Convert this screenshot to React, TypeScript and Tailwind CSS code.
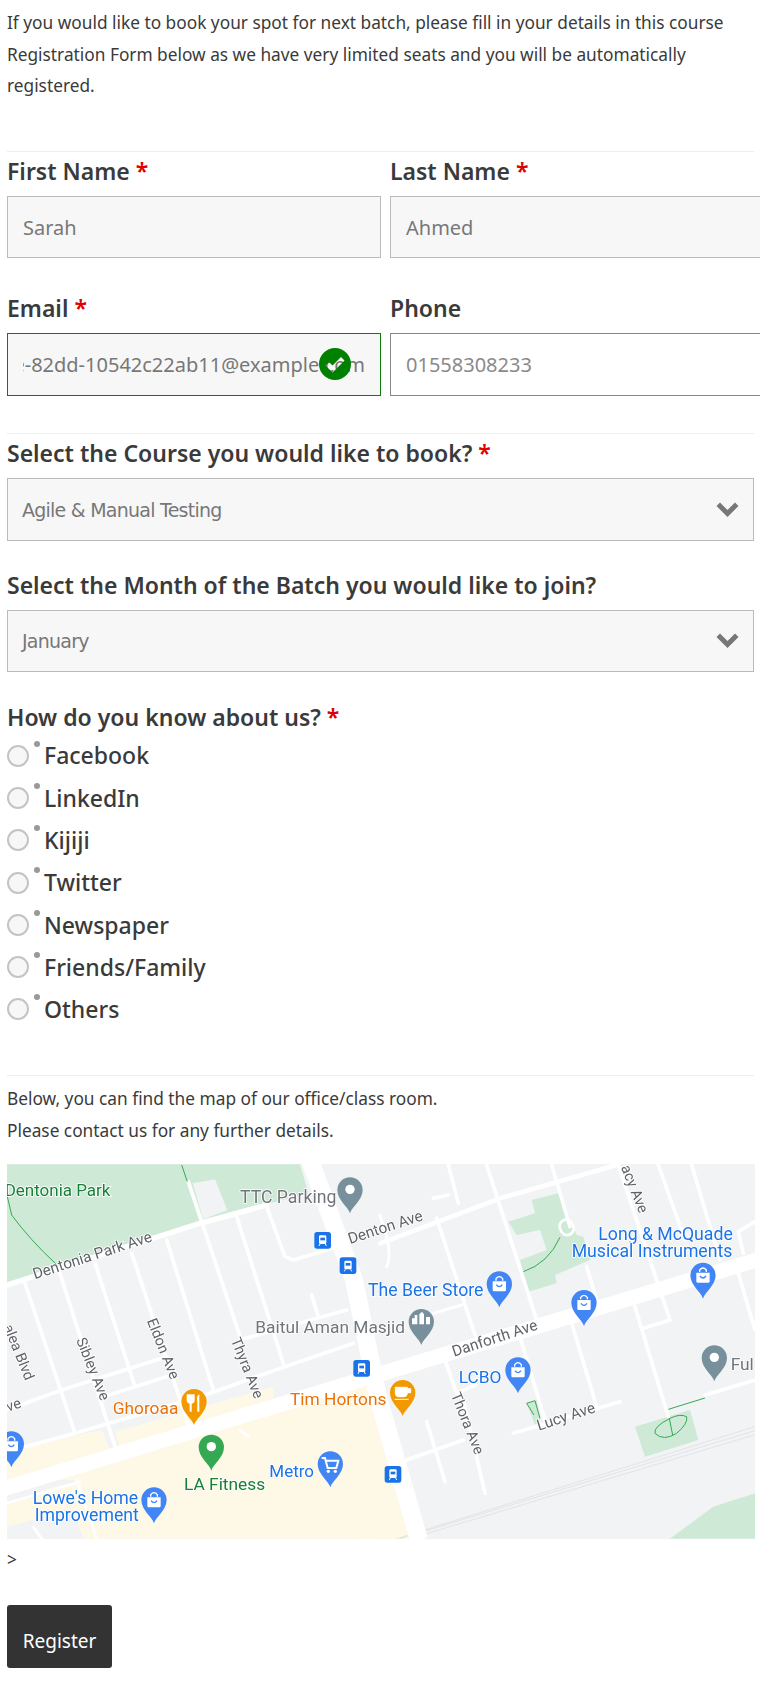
import React from 'react';

const Star = () => <span className="text-[#e00000]">*</span>;

const Field = ({ label, required, children }: { label: string; required?: boolean; children: React.ReactNode }) => (
  <div>
    <div className="text-[23px] leading-[30px] font-semibold text-[#3a3a3a] mb-[10px] whitespace-nowrap">
      {label} {required && <Star />}
    </div>
    {children}
  </div>
);

const TextBox = ({ value }: { value: string }) => (
  <div className="h-[62px] px-[15px] pt-[2px] flex items-center border border-[#bbbbbb] bg-[#f7f7f7] text-[20px] text-[#777777]">{value}</div>
);

const Chevron = () => (
  <svg viewBox="0 0 23 15" className="w-[23px] h-[15px]">
    <path d="M0.5 4L4 0.5L11.5 8L19 0.5L22.5 4L11.5 15Z" fill="#777777" />
  </svg>
);

const SelectBox = ({ value, height }: { value: string; height: string }) => (
  <div className={`${height} pl-[14px] pr-[14px] flex items-center justify-between border border-[#bbbbbb] bg-[#f7f7f7] text-[#777777]`}>
    <span className="pt-[2px] text-[19px] [font-family:'DejaVu_Sans',sans-serif] tracking-[-0.75px]">{value}</span>
    <Chevron />
  </div>
);

const Radio = ({ label }: { label: string }) => (
  <div className="h-[42.3px] flex items-center relative">
    <span className="w-[22px] h-[22px] rounded-full border-2 border-[#c4c4c4] bg-[#f7f7f7]" />
    <span className="absolute left-[27px] top-[6px] w-[6px] h-[6px] rounded-full bg-[#999999]" />
    <span className="ml-[15px] text-[23px] font-medium text-[#3a3a3a]">{label}</span>
  </div>
);

const Pin = ({ x, y, color, children }: { x: number; y: number; color: string; children?: React.ReactNode }) => (
  <g transform={`translate(${x} ${y})`}>
    <path d="M0 0C-6 -20 -38 -40 -38 -70A38 38 0 1 1 38 -70C38 -40 6 -20 0 0Z" fill={color} />
    {children}
  </g>
);

const Dot = () => <circle cx="0" cy="-72" r="14" fill="#fff" />;

const Bag = () => (
  <g>
    <path d="M-20 -78H20V-52Q20 -48 16 -48H-16Q-20 -48 -20 -52Z" fill="#fff" />
    <path d="M-10 -80V-86Q0 -98 10 -86V-80" fill="none" stroke="#fff" strokeWidth="4" />
    <path d="M-9 -68Q0 -56 9 -68" fill="none" stroke="#4285f4" strokeWidth="4" />
  </g>
);

const Transit = ({ x, y }: { x: number; y: number }) => (
  <g transform={`translate(${x} ${y})`}>
    <rect x="-25" y="-25" width="50" height="50" rx="8" fill="#1a73e8" />
    <rect x="-11" y="-15" width="22" height="26" rx="4" fill="#fff" />
    <rect x="-7" y="-8" width="14" height="8" fill="#1a73e8" />
    <path d="M-8 11L-11 17M8 11L11 17" stroke="#fff" strokeWidth="3" />
  </g>
);

const Label = ({ x, y, color, size = 52, rotate = 0, children }: { x: number; y: number; color: string; size?: number; rotate?: number; children: string }) => (
  <text
    x={x}
    y={y}
    fill={color}
    fontSize={size}
    fontFamily="Roboto, sans-serif"
    stroke="#fff"
    strokeWidth="5"
    paintOrder="stroke"
    transform={rotate ? `rotate(${rotate} ${x} ${y})` : undefined}
  >
    {children}
  </text>
);

const Road = ({ d, w = 11 }: { d: string; w?: number }) => (
  <path d={d} fill="none" stroke="#fff" strokeWidth={w} strokeLinecap="round" strokeLinejoin="round" />
);

const OfficeMap = () => (
  <svg viewBox="7 1164 748 375" className="block w-[748px] h-[375px] blur-[0.4px]">
    <rect x="7" y="1164" width="748" height="375" fill="#f1f3f4" />

    {/* left half, drawn in crop coordinates */}
    <g transform="translate(0 1160) scale(0.33333)">
      <path d="M21 13H900L925 100L790 135L21 375Z" fill="#ceead6" />
      <path d="M578 70L645 58L682 150L610 178Z" fill="#f1f3f4" />
      <path d="M20 960L350 880L1140 640V1136H20Z" fill="#fef8e7" />
      <path d="M345 815L820 680V730L360 870Z" fill="#fef8e7" />
      <path d="M75 860L305 810L335 880L21 975V880Z" fill="#fef8e7" />
      <path d="M240 960H0V1136H320Z" fill="#f1f3f4" />
      <path d="M21 1030L150 985L240 960L320 1136H21Z" fill="#fef8e7" />
      <path d="M21 1100L220 1050L250 1136H21Z" fill="#f1f3f4" />
      <path d="M1080 690L1125 675L1260 1136H1080Z" fill="#fef8e7" />

      <Road d="M21 375L600 190L800 135" w={16} />
      <Road d="M565 65L720 530" />
      <Road d="M75 370L225 820" />
      <Road d="M180 340L350 875" />
      <Road d="M285 310L405 680" />
      <Road d="M395 280L570 810" />
      <Road d="M500 240L640 690" />
      <Road d="M710 170L850 610" />
      <Road d="M800 140L855 290L880 300L1030 255" />
      <Road d="M21 750L185 690L500 590" />
      <Road d="M310 710L500 650" />
      <Road d="M75 860L225 820L600 710L855 620L1060 550" />
      <Road d="M720 540L1040 450" />
      <Road d="M935 405L955 470" />
      <Road d="M20 1030L240 965M100 1100L125 1136M230 960L290 1136" w={8} />
      <Road d="M720 810L745 830" w={8} />
      <path d="M545 15L562 65M22 110L35 165Q90 240 168 312" fill="none" stroke="#34a853" strokeWidth="3" />
    </g>

    {/* right half */}
    <g transform="translate(380 1160) scale(0.33333)">
      <path d="M455 120L535 100L590 225L610 230L630 300L525 345L530 370L445 395L420 300L500 270L480 210L410 225L385 185L465 160Z" fill="#ceead6" />
      <path d="M765 800L930 750L955 840L795 890Z" fill="#ceead6" />
      <path d="M870 1136L1000 1040L1125 1000V1136Z" fill="#ceead6" />
      <path d="M440 730L470 720L480 780L465 795Z" fill="#ceead6" />

      <Road d="M0 250L360 115L710 15" w={14} />
      <Road d="M320 15L470 480" />
      <Road d="M170 175L290 540" />
      <Road d="M205 15L235 130M160 115L205 105M515 15L570 200" />
      <Road d="M560 200m-18 10a20 20 0 1 0 36 -16a20 20 0 1 0 -36 16" w={8} />
      <Road d="M620 320L650 420" />
      <Road d="M835 15L915 240M935 15L1020 300M1125 185L1075 215L1090 280M1075 340L1125 510" />
      <Road d="M715 15L830 360L870 480L790 505" />
      <Road d="M765 440L865 770" />
      <Road d="M575 490L650 740M400 820L720 725" />
      <Road d="M420 530L495 780" />
      <Road d="M195 600L230 700L285 675" />
      <Road d="M140 785L195 965M80 900L250 840M250 720L315 1000" />
      <Road d="M975 705L1125 660" />
      <Road d="M0 165L20 230Q35 290 20 320" w={9} />
      <Road d="M160 460L245 435" w={9} />
      <path d="M50 1136L1125 800M60 1136L1125 812M90 1136L1125 824" fill="none" stroke="#dadce0" strokeWidth="2" />
      <path d="M540 232Q505 310 430 335M865 748L975 714" fill="none" stroke="#34a853" strokeWidth="3" />
      <path d="M870 775Q820 800 825 820Q850 845 890 820Q925 790 920 770Q900 760 870 775ZM868 775L878 825M440 730L465 722L480 775M440 730L462 765" fill="none" stroke="#34a853" strokeWidth="3" />
    </g>

    {/* main roads above everything else */}
    <path d="M310 1160L354 1280L378 1397L419 1540" fill="none" stroke="#fff" strokeWidth="18" strokeLinejoin="round" />
    <path d="M0 1490L380 1374L760 1259" fill="none" stroke="#fff" strokeWidth="15" />

    <g transform="translate(0 1160) scale(0.33333)">
      <Label x={14} y={108} color="#188038" size={51}>Dentonia Park</Label>
      <Label x={720} y={128} color="#70757a" size={53}>TTC Parking</Label>
      <Pin x={1050} y={160} color="#78909c"><Dot /></Pin>
      <Transit x={968} y={241} />
      <Transit x={1044} y={317} />
      <Transit x={1085} y={625} />
      <Label x={104} y={358} color="#5f6368" size={46} rotate={-18}>Dentonia Park Ave</Label>
      <Label x={1050} y={252} color="#5f6368" size={46} rotate={-18}>Denton Ave</Label>
      <Label x={10} y={500} color="#5f6368" size={44} rotate={68}>alea Blvd</Label>
      <Label x={228} y={540} color="#5f6368" size={44} rotate={68}>Sibley Ave</Label>
      <Label x={440} y={482} color="#5f6368" size={44} rotate={68}>Eldon Ave</Label>
      <Label x={692} y={540} color="#5f6368" size={44} rotate={68}>Thyra Ave</Label>
      <Label x={24} y={755} color="#5f6368" size={44} rotate={-18}>ve</Label>
      <Label x={766} y={520} color="#70757a" size={52}>Baitul Aman Masjid</Label>
      <Label x={338} y={762} color="#e8710a" size={52}>Ghoroaa</Label>
      <Pin x={582} y={795} color="#f29900">
        <path d="M-22 -92V-75Q-22 -65 -13 -64V-40H-7V-64Q2 -65 2 -75V-92M-10 -92V-75M10 -92V-40H16V-92Q6 -88 10 -70" fill="#fff" />
      </Pin>
      <Label x={870} y={735} color="#e8710a" size={52}>Tim Hortons</Label>
      <Pin x={34} y={922} color="#4285f4"><Bag /></Pin>
      <Pin x={634} y={932} color="#34a853"><Dot /></Pin>
      <Label x={552} y={990} color="#188038" size={52}>LA Fitness</Label>
      <Label x={808} y={950} color="#1a73e8" size={51}>Metro</Label>
      <Pin x={991} y={982} color="#4285f4">
        <path d="M-26 -88H-16L-8 -58H18L24 -80H-12" fill="none" stroke="#fff" strokeWidth="6" />
        <circle cx="-6" cy="-48" r="5" fill="#fff" />
        <circle cx="15" cy="-48" r="5" fill="#fff" />
      </Pin>
      <Label x={98} y={1032} color="#1a73e8" size={53}>Lowe's Home</Label>
      <Label x={104} y={1084} color="#1a73e8" size={53}>Improvement</Label>
      <Pin x={462} y={1090} color="#4285f4"><Bag /></Pin>
    </g>

    <g transform="translate(380 1160) scale(0.33333)">
      <Label x={-36} y={408} color="#1a73e8" size={53}>The Beer Store</Label>
      <Pin x={358} y={442} color="#4285f4"><Bag /></Pin>
      <Pin x={124} y={555} color="#78909c">
        <path d="M-28 -62V-80H-20V-90H-12V-62ZM-6 -62V-92L2 -100L8 -92V-62ZM14 -62V-84H26V-62Z" fill="#fff" />
      </Pin>
      <Label x={222} y={590} color="#5f6368" size={46} rotate={-18}>Danforth Ave</Label>
      <Label x={722} y={22} color="#5f6368" size={44} rotate={68}>acy Ave</Label>
      <Label x={655} y={240} color="#1a73e8" size={53}>Long &amp; McQuade</Label>
      <Label x={575} y={292} color="#1a73e8" size={53}>Musical Instruments</Label>
      <Pin x={612} y={498} color="#4285f4"><Bag /></Pin>
      <Pin x={969} y={416} color="#4285f4"><Bag /></Pin>
      <Pin x={1003} y={664} color="#78909c"><Dot /></Pin>
      <Label x={1052} y={630} color="#70757a" size={52}>Ful</Label>
      <Label x={236} y={668} color="#1a73e8" size={52}>LCBO</Label>
      <Pin x={414} y={700} color="#4285f4"><Bag /></Pin>
      <Pin x={68} y={768} color="#f29900">
        <path d="M-22 -86H14V-68Q14 -58 4 -58H-12Q-22 -58 -22 -68ZM14 -82H24V-70H14M-24 -50H18" fill="#fff" stroke="#fff" strokeWidth="3" />
      </Pin>
      <Label x={212} y={704} color="#5f6368" size={44} rotate={68}>Thora Ave</Label>
      <Label x={476} y={812} color="#5f6368" size={46} rotate={-18}>Lucy Ave</Label>
      <Transit x={39} y={943} />
    </g>
  </svg>
);

export default function App() {
  return (
    <div className="w-[760px] h-[1704px] overflow-hidden bg-white px-[7px] text-[#3a3a3a] [font-family:'Noto_Sans',sans-serif]">
      <p className="w-[746px] pt-[7px] text-[17.3px] leading-[31.5px]">
        If you would like to book your spot for next batch, please fill in your details in this course Registration Form below as we have very limited seats and you will be automatically registered.
      </p>
      <div className="mt-[49px] h-px w-[747px] bg-[#eeeeee]" />

      <div className="mt-[4px] grid grid-cols-[374px_374px] gap-x-[9px] gap-y-[35px] w-[757px]">
        <Field label="First Name" required>
          <TextBox value="Sarah" />
        </Field>
        <Field label="Last Name" required>
          <TextBox value="Ahmed" />
        </Field>
        <Field label="Email" required>
          <div className="relative h-[63px] px-[15px] pt-[2px] flex items-center border border-[#0a7d0a] bg-[#f7f7f7] text-[20px] text-[#777777]">
            <div className="w-full flex justify-end overflow-hidden whitespace-nowrap">
              <span className="shrink-0">3f1e-82dd-10542c22ab11@example.com</span>
            </div>
            <svg viewBox="0 0 32 32" className="absolute left-[311px] top-[14px] w-[32px] h-[32px]">
              <path
                fillRule="evenodd"
                fill="#008000"
                d="M16 0a16 16 0 1 0 0 32a16 16 0 1 0 0-32ZM13.5 24.5L6.5 17.5L10 14L13.5 17.5L22 9L25.5 12.5Z"
              />
            </svg>
          </div>
        </Field>
        <Field label="Phone">
          <div className="h-[63px] px-[15px] pt-[2px] flex items-center border border-[#888888] bg-white text-[20px] text-[#8a8a8a]">01558308233</div>
        </Field>
      </div>

      <div className="mt-[37px] h-px w-[747px] bg-[#eeeeee]" />

      <div className="mt-[4px] w-[747px] flex flex-col gap-[29px]">
        <Field label="Select the Course you would like to book?" required>
          <SelectBox value="Agile & Manual Testing" height="h-[63px]" />
        </Field>
        <Field label="Select the Month of the Batch you would like to join?">
          <SelectBox value="January" height="h-[62px]" />
        </Field>
      </div>

      <div className="mt-[30px] text-[23px] leading-[30px] font-semibold">
        How do you know about us? <Star />
      </div>
      <div className="mt-[3px]">
        {['Facebook', 'LinkedIn', 'Kijiji', 'Twitter', 'Newspaper', 'Friends/Family', 'Others'].map(o => (
          <Radio key={o} label={o} />
        ))}
      </div>

      <div className="mt-[44px] h-px w-[747px] bg-[#eeeeee]" />
      <p className="mt-[7px] text-[17.3px] leading-[32px]">
        Below, you can find the map of our office/class room.
        <br />
        Please contact us for any further details.
      </p>
      <div className="mt-[17px]">
        <OfficeMap />
      </div>
      <p className="mt-[5px] text-[17.3px] leading-[32px]">&gt;</p>
      <button className="mt-[29px] w-[105px] h-[63px] rounded-[3px] bg-[#333333] text-white text-[19px] flex items-center justify-center pt-[11px]">
        Register
      </button>
    </div>
  );
}
